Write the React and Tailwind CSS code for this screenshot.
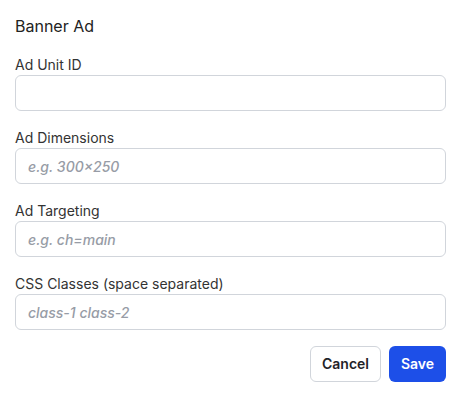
export default function App() {
  const fields = [
    { label: "Ad Unit ID", ph: "" },
    { label: "Ad Dimensions", ph: "e.g. 300×250" },
    { label: "Ad Targeting", ph: "e.g. ch=main" },
    { label: "CSS Classes (space separated)", ph: "class-1 class-2" },
  ];
  return (
    <div className="w-[460px] h-[400px] bg-white pl-[15px] pr-[14px] pt-[14px] flex flex-col gap-[17px] text-[#1f2328]" style={{ fontFamily: "Inter, 'Noto Sans', sans-serif" }}>
      <div className="text-base leading-6 text-[#222]">Banner Ad</div>
      {fields.map((f) => (
        <div key={f.label} className="flex flex-col">
          <label className="text-sm leading-5 text-[#333]">{f.label}</label>
          <input
            placeholder={f.ph}
            className="h-9 w-full rounded-md border border-[#d1d5db] px-3 text-sm outline-none placeholder:italic placeholder:font-medium placeholder:text-[#979ca6]"
          />
        </div>
      ))}
      <div className="flex justify-end gap-2 -mt-px">
        <button className="h-9 w-[71px] rounded-md border border-[#d1d5db] bg-white text-sm font-semibold text-[#1f2328]">Cancel</button>
        <button className="h-9 w-[57px] rounded-md bg-[#1d4fe8] text-sm font-semibold text-white">Save</button>
      </div>
    </div>
  );
}
